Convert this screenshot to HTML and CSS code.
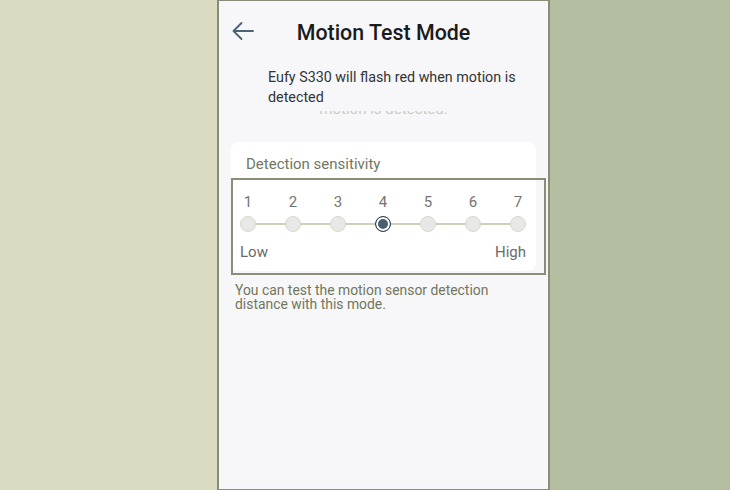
FILE: index.html
```html
<!DOCTYPE html>
<html>
<head>
<meta charset="utf-8">
<link rel="stylesheet" href="styles.css">
</head>
<body>
<div class="pane-left"></div>
<div class="phone">
  <div class="header">
    <svg class="back" width="22" height="18" viewBox="0 0 22 18">
      <path d="M21 9H1.5M9.5 1L1.5 9L9.5 17" fill="none" stroke="#4b6475" stroke-width="1.8" stroke-linecap="round" stroke-linejoin="round"/>
    </svg>
    <div class="title">Motion Test Mode</div>
    <div></div>
  </div>
  <div class="desc">Eufy S330 will flash red when motion is detected</div>
  <div class="ghost"><span>motion is detected.</span></div>
  <div class="card">
    <div class="card-title">Detection sensitivity</div>
    <div class="nums">
      <span>1</span><span>2</span><span>3</span><span>4</span><span>5</span><span>6</span><span>7</span>
    </div>
    <div class="dots">
      <span class="dot"></span><span class="dot"></span><span class="dot"></span><span class="dot on"></span><span class="dot"></span><span class="dot"></span><span class="dot"></span>
    </div>
    <div class="labels"><span>Low</span><span>High</span></div>
    <div class="highlight"></div>
  </div>
  <div class="note">You can test the motion sensor detection distance with this mode.</div>
</div>
<div class="pane-right"></div>
</body>
</html>
```
FILE: styles.css
```css
html, body {
  margin: 0;
  height: 100%;
}
body {
  display: flex;
  font-family: Roboto, "Liberation Sans", sans-serif;
  overflow: hidden;
}
.pane-left {
  width: 217px;
  background: #dadbc0;
}
.pane-right {
  flex: 1;
  background: #b4bea0;
}
.phone {
  width: 329px;
  height: 488px;
  background: #f7f7f9;
  border: 2px solid #8a8c77;
  border-top-width: 1px;
  display: flex;
  flex-direction: column;
}
.header {
  height: 61px;
  display: grid;
  grid-template-columns: 1fr auto 1fr;
  align-items: center;
  padding-left: 13px;
  padding-right: 13px;
}
.back {
  display: block;
  justify-self: start;
  margin-top: -2px;
}
.title {
  font-size: 21.4px;
  font-weight: 500;
  color: #1b1b1b;
  margin-top: 1px;
}
.desc {
  margin-top: 5px;
  padding-left: 49px;
  width: 256px;
  font-size: 14.3px;
  line-height: 20px;
  color: #333436;
}
.ghost {
  height: 4px;
  overflow: hidden;
  text-align: center;
  margin-top: 4px;
  margin-bottom: -1px;
  font-size: 15px;
  line-height: 16px;
  color: #cbcbc2;
}
.ghost span {
  display: block;
  margin-top: -10px;
}
.card {
  position: relative;
  margin: 28px 12px 0;
  background: #ffffff;
  border-radius: 8px;
  padding: 13px 10px 10px 9px;
}
.card-title {
  padding-left: 6px;
  font-size: 15px;
  line-height: 18px;
  color: #73775f;
}
.nums {
  margin-top: 21px;
  display: flex;
  justify-content: space-between;
  font-size: 15px;
  line-height: 16px;
  color: #747474;
}
.nums span {
  width: 16px;
  text-align: center;
}
.dots {
  position: relative;
  margin-top: 6px;
  display: flex;
  justify-content: space-between;
}
.dots::before {
  content: "";
  position: absolute;
  left: 8px;
  right: 8px;
  top: 7px;
  height: 2px;
  background: #cfcfba;
}
.dot {
  position: relative;
  width: 16px;
  height: 16px;
  box-sizing: border-box;
  border-radius: 50%;
  background: #e8e8e8;
  border: 1.5px solid #d8d8c8;
}
.dot.on {
  background: #4a5e6c;
  border: 1.5px solid #2c4454;
  box-shadow: inset 0 0 0 2px #ffffff;
}
.labels {
  margin-top: 11px;
  display: flex;
  justify-content: space-between;
  font-size: 15px;
  line-height: 18px;
  color: #6a6a6a;
}
.highlight {
  position: absolute;
  left: 0;
  right: -10px;
  top: 36px;
  height: 93px;
  border: 2px solid #8b8d76;
}
.note {
  margin-top: 12px;
  padding-left: 16px;
  width: 290px;
  font-size: 13.9px;
  line-height: 14px;
  color: #72765f;
}
```
